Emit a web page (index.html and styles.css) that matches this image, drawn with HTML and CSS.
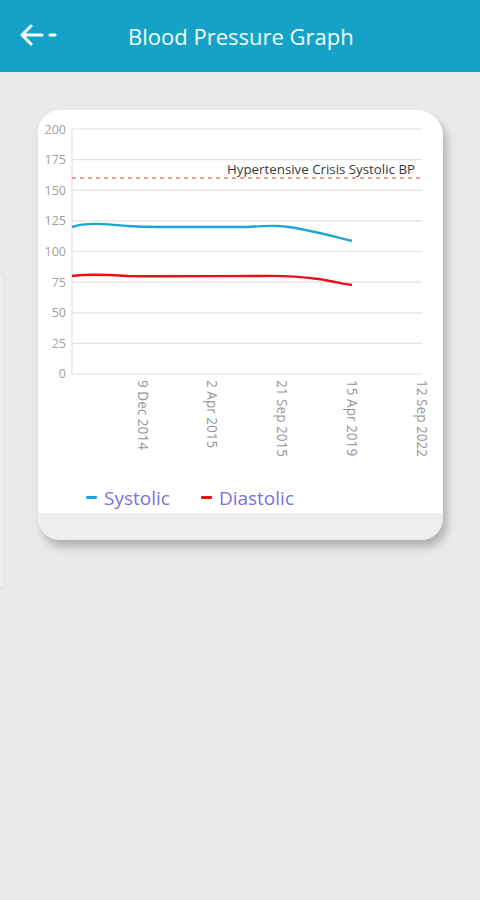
FILE: index.html
```html
<!DOCTYPE html>
<html>
<head>
<meta charset="utf-8">
<link rel="stylesheet" href="styles.css">
</head>
<body>
<header class="appbar">
  <svg class="back" width="40" height="24" viewBox="0 0 40 24">
    <path d="M22 12 H3 M11 3 L2 12 L11 21" fill="none" stroke="#fff" stroke-width="3" stroke-linecap="round" stroke-linejoin="round"/>
    <path d="M30 12 H35" stroke="#fff" stroke-width="3" stroke-linecap="round"/>
  </svg>
  <h1 class="title">Blood Pressure Graph</h1>
</header>
<main class="content">
  <div class="side-panel"></div>
  <section class="card">
    <svg class="chart" width="405" height="372" viewBox="0 0 405 372">
      <g class="grid" stroke="#e2e2e2" stroke-width="1.2">
        <line x1="34" y1="19" x2="384" y2="19"/>
        <line x1="34" y1="49.6" x2="384" y2="49.6"/>
        <line x1="34" y1="80.3" x2="384" y2="80.3"/>
        <line x1="34" y1="110.9" x2="384" y2="110.9"/>
        <line x1="34" y1="141.5" x2="384" y2="141.5"/>
        <line x1="34" y1="172.1" x2="384" y2="172.1"/>
        <line x1="34" y1="202.8" x2="384" y2="202.8"/>
        <line x1="34" y1="233.4" x2="384" y2="233.4"/>
        <line x1="34" y1="264" x2="384" y2="264"/>
        <line x1="34" y1="19" x2="34" y2="264"/>
      </g>
      <g class="ylab" font-size="12.5" fill="#a0a0a0" text-anchor="end">
        <text x="28" y="23.5">200</text>
        <text x="28" y="54">175</text>
        <text x="28" y="84.7">150</text>
        <text x="28" y="115.3">125</text>
        <text x="28" y="146">100</text>
        <text x="28" y="176.5">75</text>
        <text x="28" y="207.2">50</text>
        <text x="28" y="237.8">25</text>
        <text x="28" y="268.4">0</text>
      </g>
      <line x1="34" y1="68" x2="384" y2="68" stroke="#e0363c" stroke-width="1" stroke-dasharray="4 4"/>
      <text x="189" y="64" font-size="13" fill="#3a3a3a" textLength="188" lengthAdjust="spacingAndGlyphs">Hypertensive Crisis Systolic BP</text>
      <path d="M34 117 C48 112 68 114 90 116 C110 117.5 140 117 200 117 C215 117 228 115.5 240 116 C262 117 290 125 314 131" fill="none" stroke="#1ea5d8" stroke-width="2.4"/>
      <path d="M34 166 C48 164 65 164.5 90 166 C120 166.5 180 166 220 166 C240 165.5 262 166.5 280 169 C295 171 305 174 314 175" fill="none" stroke="#e5121b" stroke-width="2.4"/>
      <g class="xlab" font-size="13.6" fill="#959595">
        <text transform="translate(99.5 270) rotate(90)">9 Dec 2014</text>
        <text transform="translate(168.5 270) rotate(90)">2 Apr 2015</text>
        <text transform="translate(239 270) rotate(90)">21 Sep 2015</text>
        <text transform="translate(309 270) rotate(90)">15 Apr 2019</text>
        <text transform="translate(379 270) rotate(90)">12 Sep 2022</text>
      </g>
    </svg>
    <div class="legend">
      <span class="item"><span class="swatch sys"></span>Systolic</span>
      <span class="item"><span class="swatch dia"></span>Diastolic</span>
    </div>
    <div class="card-foot"></div>
  </section>
</main>
</body>
</html>
```
FILE: styles.css
```css
* { box-sizing: border-box; }
html, body { margin: 0; padding: 0; }
body {
  width: 480px;
  height: 900px;
  background: #ebe9e8;
  font-family: "Open Sans", "Liberation Sans", sans-serif;
  overflow: hidden;
}
.appbar {
  height: 72px;
  background: #14a3c7;
  display: flex;
  align-items: center;
  padding-left: 20px;
}
.back { display: block; margin-top: -2px; }
.title {
  margin: 0 0 0 68px;
  font-weight: 400;
  font-size: 22px;
  color: #f4fbfd;
  letter-spacing: 0;
}
.content {
  display: flex;
  align-items: flex-start;
  gap: 33px;
  padding-top: 38px;
}
.side-panel {
  width: 5px;
  height: 313px;
  margin-top: 165px;
  background: #f0eeed;
  border: 1px solid #e2e0df;
  border-left: none;
}
.card {
  width: 405px;
  height: 430px;
  background: #fff;
  border-radius: 22px 26px 22px 22px;
  box-shadow: 4px 7px 9px rgba(0,0,0,0.24);
  display: flex;
  flex-direction: column;
  overflow: hidden;
}
.chart { display: block; font-family: "Open Sans", sans-serif; }
.legend {
  display: flex;
  gap: 31px;
  padding-left: 48px;
  height: 31px;
  align-items: center;
}
.item {
  display: flex;
  align-items: center;
  font-size: 19px;
  color: #7a72d8;
}
.swatch {
  display: inline-block;
  width: 11px;
  height: 3px;
  margin-right: 7px;
  border-radius: 1px;
}
.sys { background: #1ea5d8; }
.dia { background: #e5121b; }
.card-foot {
  flex: 1;
  background: #efeeed;
}
```
